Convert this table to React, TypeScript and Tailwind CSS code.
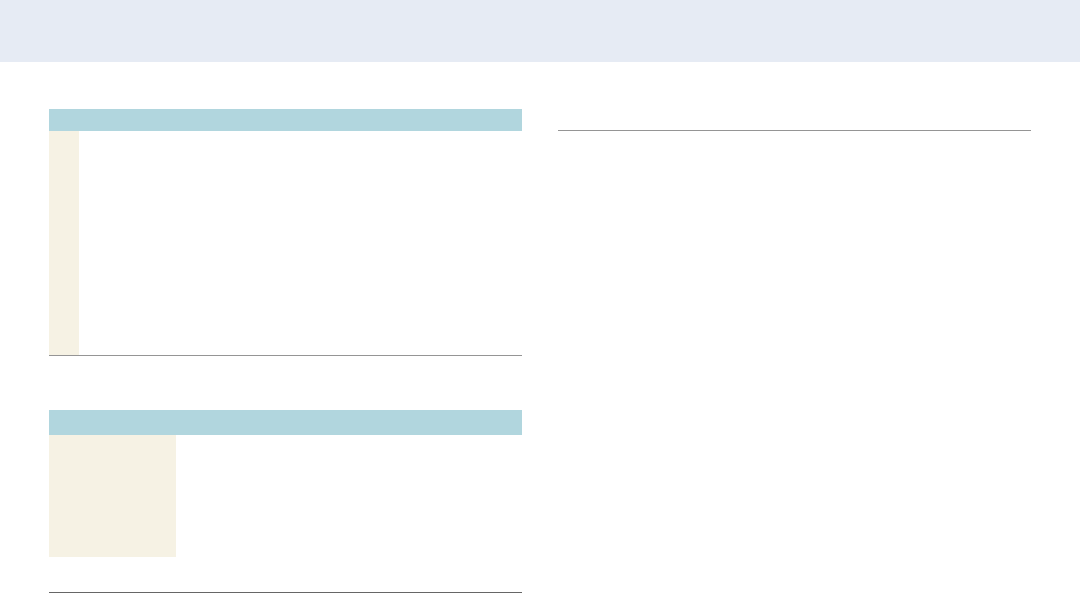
import React from "react";

const App = () => {
  return (
    <div className="min-h-[593px] w-[1080px] bg-white font-['Liberation_Sans',sans-serif]">
      <header className="h-[62px] bg-[#e6ebf4]" />
      <main className="flex gap-[36px] px-[49px] pt-[47px]">
        <section className="flex w-[473px] flex-col">
          <div className="flex flex-col">
            <div className="h-[22px] bg-[#b1d6de]" />
            <div className="flex h-[225px] border-b border-[#959595]">
              <div className="w-[30px] bg-[#f6f2e4]" />
              <div className="flex-1" />
            </div>
          </div>
          <div className="mt-[54px] flex flex-col">
            <div className="h-[25px] bg-[#b1d6de]" />
            <div className="flex h-[158px] flex-col border-b border-[#666666]">
              <div className="flex h-[122px]">
                <div className="w-[127px] bg-[#f6f2e4]" />
                <div className="flex-1" />
              </div>
            </div>
          </div>
        </section>
        <section className="flex w-[473px] flex-col">
          <div className="h-[22px] border-b border-[#959595]" />
        </section>
      </main>
    </div>
  );
};

export default App;
